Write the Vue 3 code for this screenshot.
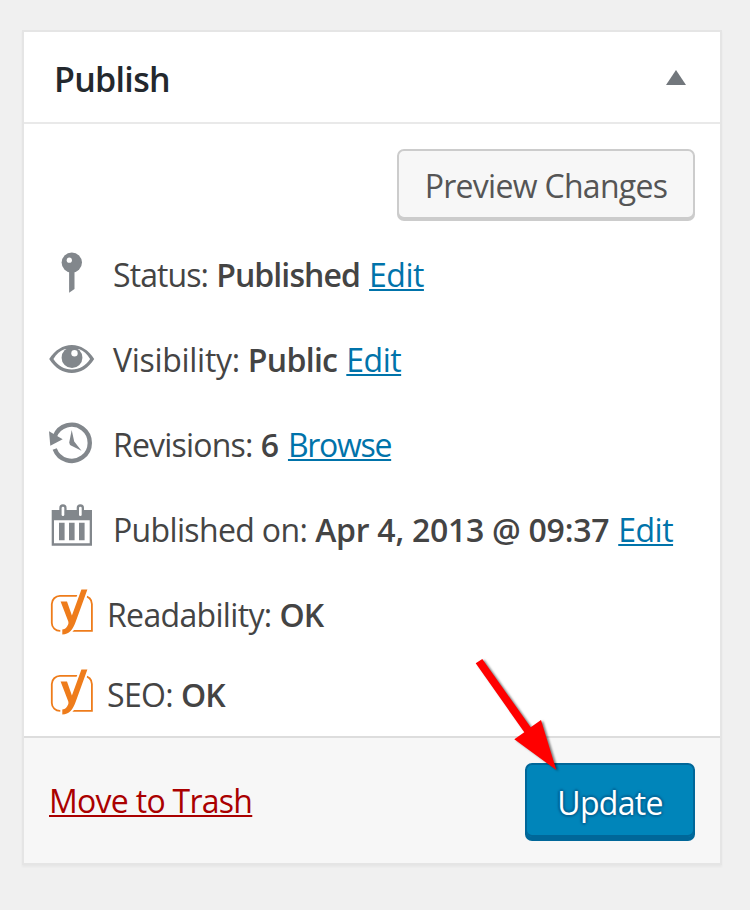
<script setup>
const rows = [
  { icon: 'pin', label: 'Status:', value: 'Published', link: 'Edit' },
  { icon: 'eye', label: 'Visibility:', value: 'Public', link: 'Edit' },
  { icon: 'history', label: 'Revisions:', value: '6', link: 'Browse' },
  { icon: 'calendar', label: 'Published on:', value: 'Apr 4, 2013 @ 09:37', link: 'Edit' },
  { icon: 'yoast', label: 'Readability:', value: 'OK' },
  { icon: 'yoast', label: 'SEO:', value: 'OK', last: true },
]
</script>

<template>
  <main class="page">
    <section class="box">
      <header class="head">
        <h2>Publish</h2>
        <svg class="toggle" width="20" height="15" viewBox="0 0 20 15"><path d="M10 0L20 15H0z" /></svg>
      </header>

      <div class="preview">
        <button class="btn">Preview Changes</button>
      </div>

      <div
        v-for="(row, i) in rows"
        :key="i"
        class="row"
        :class="[row.icon, { last: row.last }]"
      >
        <svg class="icon" width="46" height="45" viewBox="0 0 46 45">
          <template v-if="row.icon === 'pin'">
            <circle cx="22.8" cy="11.6" r="10.2" />
            <path d="M20.1 20V41.7L25.5 38V20z" />
            <circle class="hole" cx="20.3" cy="9.2" r="2.6" />
          </template>
          <template v-else-if="row.icon === 'eye'">
            <path fill-rule="evenodd" d="M0.2 23C6 14 14 9 22.8 9S39.5 14 45.2 23C39.5 32 31.5 37 22.8 37S6 32 .2 23zM4.4 23C9 30 15 33.4 22.8 33.4S36.6 30 41.1 23C38 18 34.5 14.8 30.5 13.3H15.500C11 15 7.5 18 4.4 23z" />
            <circle cx="23" cy="21.7" r="10.4" />
            <circle class="hole" cx="25.5" cy="17.3" r="3.2" />
          </template>
          <template v-else-if="row.icon === 'history'">
            <path class="ring" d="M5.8 15.3A18.1 18.1 0 1 1 5.7 28" />
            <path d="M0 10.3L13.7 18.3L1.3 24.7z" />
            <path d="M22.7 9L25.2 20.5L32.5 29.7L21 24L20.2 21.5z" />
          </template>
          <template v-else-if="row.icon === 'calendar'">
            <path fill-rule="evenodd" d="M2.7 4H43V39.7H2.7zM5 14.3V37.3H40.7V14.3z" />
            <path d="M10 16.700h5.6v17.6H10zM20 16.7h5.6v17.6H20zM30 16.7h5.600v17.6H30z" />
            <rect x="10.3" y="-1.7" width="7.3" height="13" rx="3.6" />
            <rect x="27.7" y="-1.7" width="7.3" height="13" rx="3.6" />
            <rect class="hole" x="12.6" y="0.7" width="2.7" height="9.3" rx="1.3" />
            <rect class="hole" x="30" y="0.7" width="2.7" height="9.3" rx="1.3" />
          </template>
          <template v-else>
            <path class="frame" d="M42.9 39.9H11C6.5 39.9 2.8 36.5 2.8 32V13C2.8 8.5 6.5 4.9 11 4.9H34.5C39.5 4.9 42.9 8.5 42.9 13z" />
            <path class="mark" d="M32.4-1.4H38.4L26.8 30.5C23.7 38.7 20.5 43.2 13.3 43.5V38.5C16.5 38.2 18 36.3 19.2 33.2C19.6 32.2 19.5 31.2 19.1 30L11.6 10.6H18L22.9 24.5z" />
          </template>
        </svg>
        <span class="label">{{ row.label }}</span>
        <b class="value">{{ row.value }}</b>
        <a v-if="row.link" class="link">{{ row.link }}</a>
      </div>

      <footer class="foot">
        <a class="trash">Move to Trash</a>
        <button class="btn primary">Update</button>
      </footer>
    </section>

    <svg class="arrow" width="90" height="120" viewBox="470 655 90 120">
      <path d="M475.7 663.3L482.3 659L530.7 727.3L541 720L556.3 770L514.3 739.3L524.3 732.3z" />
    </svg>
  </main>
</template>

<style>
body { background: #f0f0f0; }
</style>

<style scoped>
.page {
  position: relative;
  box-sizing: border-box;
  width: 750px;
  height: 910px;
  padding: 30px 28px 0 22px;
  background: #f0f0f0;
  color: #444;
  font: 32px/44px "Open Sans", "Noto Sans", sans-serif;
  white-space: nowrap;
}
.box {
  box-sizing: border-box;
  width: 700px;
  height: 835px;
  border: 2px solid #e5e5e5;
  background: #fff;
  box-shadow: 0 2px 2px rgba(0, 0, 0, 0.04);
}
.head {
  box-sizing: border-box;
  display: flex;
  align-items: center;
  justify-content: space-between;
  height: 92px;
  padding: 0 34px 0 30px;
  border-bottom: 2px solid #e9e9e9;
}
h2 {
  margin: 0;
  padding-top: 4px;
  color: #23282d;
  font-size: 34px;
  font-weight: 600;
  letter-spacing: -0.7px;
}
.toggle { fill: #72777c; }
.preview {
  display: flex;
  justify-content: flex-end;
  height: 82px;
  padding: 25px 25px 0 0;
}
.btn {
  box-sizing: border-box;
  width: 298px;
  height: 70px;
  padding: 4px 0 0;
  border: 2px solid #ccc;
  border-radius: 7px;
  background: #f7f7f7;
  box-shadow: 0 2px 0 #ccc;
  color: #555;
  font: inherit;
  letter-spacing: -0.7px;
}
.row {
  display: flex;
  align-items: center;
  height: 85px;
  padding-left: 25px;
}
.row.last { height: 75px; }
.icon { flex: none; overflow: visible; fill: #82878c; }
.hole { fill: #fff; }
.ring { fill: none; stroke: #82878c; stroke-width: 4.4; }
.frame { fill: none; stroke: #ee7c1b; stroke-width: 1.8; }
.mark { fill: #ee7c1b; stroke: #fff; stroke-width: 4; paint-order: stroke; }
.label, .value, .link { padding-top: 2px; }
.label { margin-left: 18px; letter-spacing: -0.9px; }
.value { margin-left: 8px; font-weight: 600; letter-spacing: -0.9px; }
.link { margin-left: 9px; color: #0073aa; letter-spacing: -0.5px; }
.eye .label { letter-spacing: -0.3px; }
.eye .value { letter-spacing: -0.7px; }
.history .label { letter-spacing: -0.8px; }
.history .value { letter-spacing: 0; }
.calendar .label { letter-spacing: -0.65px; }
.calendar .value { letter-spacing: -0.26px; }
.history .link { letter-spacing: -1.3px; }
.yoast .label { margin-left: 12px; letter-spacing: -0.67px; }
.link, .trash {
  text-decoration: underline;
  text-decoration-thickness: 2px;
  text-underline-offset: 2px;
  text-decoration-skip-ink: none;
}
.foot {
  box-sizing: border-box;
  display: flex;
  justify-content: space-between;
  height: 127px;
  margin-top: 5px;
  padding: 25px 25px 0 25px;
  border-top: 2px solid #ddd;
  background: #f7f7f7;
}
.trash { color: #a00; margin-top: 16px; height: 44px; letter-spacing: -0.72px; }
.primary {
  width: 170px;
  height: 76px;
  border-color: #006799;
  background: #0085ba;
  box-shadow: 0 2px 0 #006799, inset 0 -2px 0 #006799;
  color: #fff;
  text-shadow: 0 -2px 2px #006799, 2px 0 2px #006799, 0 2px 2px #006799, -2px 0 2px #006799;
}
.arrow {
  position: absolute;
  left: 470px;
  top: 655px;
  overflow: visible;
  fill: #f00;
  filter: drop-shadow(2px 1px 1px rgba(0, 0, 0, 0.5));
}
</style>
